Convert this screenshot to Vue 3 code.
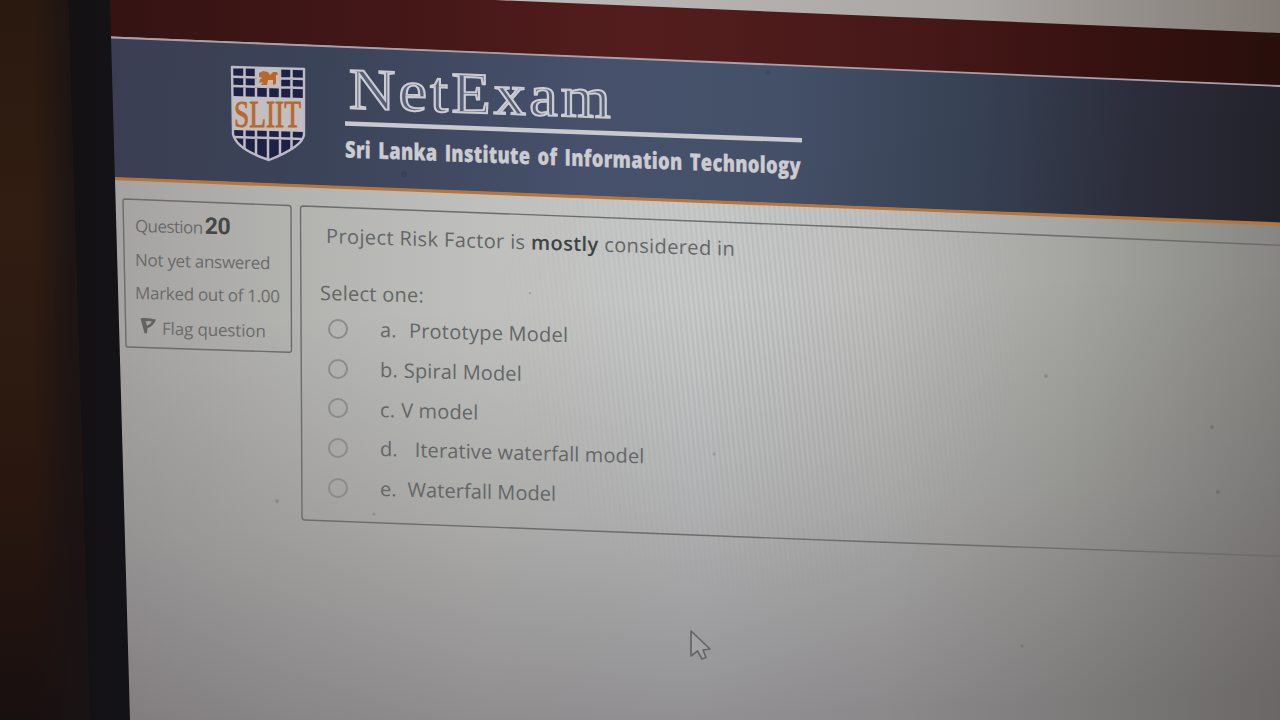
<script setup>
const options = [
  { key: 'a', letter: 'a.', text: 'Prototype Model' },
  { key: 'b', letter: 'b.', text: 'Spiral Model' },
  { key: 'c', letter: 'c.', text: 'V model' },
  { key: 'd', letter: 'd.', text: 'Iterative waterfall model' },
  { key: 'e', letter: 'e.', text: 'Waterfall Model' }
]
const specks = [
  [768, 73, 2.4], [404, 174, 3], [1046, 376, 2], [1212, 427, 2], [1218, 492, 2],
  [714, 454, 1.5], [277, 501, 2], [374, 514, 1.5], [530, 293, 1.2], [1022, 646, 1.5]
]
</script>

<template>
  <main class="scene">
    <svg class="backdrop" viewBox="0 0 1280 720" aria-hidden="true">
      <defs>
        <linearGradient id="page" x1="110" x2="1280" y1="0" y2="0" gradientUnits="userSpaceOnUse">
          <stop offset="0" stop-color="#a5a3a2" />
          <stop offset=".15" stop-color="#b2b2af" />
          <stop offset=".32" stop-color="#bfc0bd" />
          <stop offset=".5" stop-color="#c4c6c6" />
          <stop offset=".66" stop-color="#bbbcba" />
          <stop offset=".82" stop-color="#a5a6a1" />
          <stop offset="1" stop-color="#878682" />
        </linearGradient>
        <linearGradient id="fall" x1="640" x2="660" y1="300" y2="720" gradientUnits="userSpaceOnUse">
          <stop offset="0" stop-color="#383038" stop-opacity="0" />
          <stop offset=".5" stop-color="#383038" stop-opacity=".15" />
          <stop offset="1" stop-color="#383038" stop-opacity=".36" />
        </linearGradient>
        <linearGradient id="banner" x1="112" x2="1280" y1="0" y2="90" gradientUnits="userSpaceOnUse">
          <stop offset="0" stop-color="#3b3e52" />
          <stop offset=".18" stop-color="#3b4358" />
          <stop offset=".42" stop-color="#47516c" />
          <stop offset=".58" stop-color="#445068" />
          <stop offset=".75" stop-color="#364052" />
          <stop offset=".88" stop-color="#2c2d3b" />
          <stop offset="1" stop-color="#22222b" />
        </linearGradient>
        <linearGradient id="maroon" x1="110" x2="1280" y1="0" y2="0" gradientUnits="userSpaceOnUse">
          <stop offset="0" stop-color="#351313" />
          <stop offset=".25" stop-color="#441717" />
          <stop offset=".45" stop-color="#541d1d" />
          <stop offset=".7" stop-color="#461818" />
          <stop offset=".86" stop-color="#35110f" />
          <stop offset="1" stop-color="#280f0c" />
        </linearGradient>
        <linearGradient id="chrome" x1="495" x2="1280" y1="0" y2="0" gradientUnits="userSpaceOnUse">
          <stop offset="0" stop-color="#bdbbbb" />
          <stop offset=".6" stop-color="#aaa6a3" />
          <stop offset="1" stop-color="#827b76" />
        </linearGradient>
        <linearGradient id="wall" x1="0" x2="0" y1="0" y2="720" gradientUnits="userSpaceOnUse">
          <stop offset="0" stop-color="#2a190f" />
          <stop offset=".3" stop-color="#311d12" />
          <stop offset=".68" stop-color="#29170f" />
          <stop offset="1" stop-color="#180f0f" />
        </linearGradient>
        <linearGradient id="wallShade" x1="0" x2="95" y1="0" y2="0" gradientUnits="userSpaceOnUse">
          <stop offset=".35" stop-color="#1a1314" stop-opacity="0" />
          <stop offset=".75" stop-color="#1a1314" stop-opacity=".85" />
        </linearGradient>
        <linearGradient id="bezel" x1="66" x2="128" y1="0" y2="0" gradientUnits="userSpaceOnUse">
          <stop offset="0" stop-color="#141012" />
          <stop offset="1" stop-color="#131317" />
        </linearGradient>
        <radialGradient id="spot" cx="760" cy="330" r="270" gradientUnits="userSpaceOnUse">
          <stop offset="0" stop-color="#fff" />
          <stop offset="1" stop-color="#000" />
        </radialGradient>
        <pattern id="stripes" width="5" height="20" patternUnits="userSpaceOnUse" patternTransform="rotate(-6)">
          <rect width="1.6" height="20" fill="#fff" opacity=".15" />
          <rect x="2.6" width="1.4" height="20" fill="#555" opacity=".09" />
        </pattern>
        <mask id="spotMask"><rect width="1280" height="720" fill="url(#spot)" /></mask>
      </defs>
      <rect width="1280" height="720" fill="url(#page)" />
      <rect width="1280" height="720" fill="url(#fall)" />
      <rect y="200" width="1280" height="520" fill="url(#stripes)" mask="url(#spotMask)" />
      <path d="M490 0H1280V40Z" fill="url(#chrome)" />
      <path d="M100 0H495L1280 33V86L100 36Z" fill="url(#maroon)" />
      <path d="M100 37L640 59L1280 86V223L640 198L100 177Z" fill="url(#banner)" />
      <path d="M100 37L640 59L1280 86" fill="none" stroke="#aaa0aa" stroke-width="1.8" />
      <path d="M100 178L640 199L1280 224" fill="none" stroke="#b8753a" stroke-width="3.2" />
      <path d="M125 199L289 205.500Q291 206 291 208L291.500 350Q291.500 352.500 289 352.300L128 347Q126 347 126 345L123 201Q123 199 125 199Z" class="outline" />
      <path d="M1285 245.500L850 227L303 206Q300.500 206 300.500 209L302 517Q302 520 305 520L850 541L1285 556.500" class="outline" />
      <path d="M0 0H110L130 720H0Z" fill="url(#bezel)" />
      <path d="M0 0H68L90 720H0Z" fill="url(#wall)" />
      <path d="M0 0H68L90 720H0Z" fill="url(#wallShade)" />
      <circle v-for="(s, i) in specks" :key="i" :cx="s[0]" :cy="s[1]" :r="s[2]" fill="#25252c" opacity=".18" />
    </svg>

    <div class="screen">
      <header class="brand">
        <svg class="crest" viewBox="0 0 76 98" aria-label="SLIIT">
          <defs><clipPath id="shield"><path d="M2 2L74 4V70Q72 82 39 95Q6 84 3 69Z" /></clipPath></defs>
          <path d="M2 2L74 4V70Q72 82 39 95Q6 84 3 69Z" fill="#1d2145" />
          <g clip-path="url(#shield)">
            <path d="M14.500 3V94M26 3V94M38 20V96M50 3V94M61.500 4V94M3 11.800L74 14M3 21L74 23M3 72L73 74" stroke="#bdbac1" stroke-width="2.500" fill="none" />
          </g>
          <path d="M27 3L49 4V22L27 21Z" fill="#c2bdbf" />
          <path d="M3 31L74 33V67L3 65Z" fill="#c2bfc3" />
          <path d="M2 2L74 4V70Q72 82 39 95Q6 84 3 69Z" fill="none" stroke="#bdbac1" stroke-width="2.400" stroke-linejoin="round" />
          <path d="M29 8l4-2 5 1 2 3 3-3 4 0 1 3-2 0 0 9-3 1 0-5-5 0-1 5-6 0 2-3-4 1 1-4 3-1-4-1z" fill="#b9672b" />
          <text x="4" y="62" textLength="67" lengthAdjust="spacingAndGlyphs" class="crest-name">SLIIT</text>
        </svg>
        <svg class="wordmark" viewBox="0 0 470 130" aria-label="NetExam">
          <text x="4" y="43" textLength="265" lengthAdjust="spacingAndGlyphs" class="product">NetExam</text>
          <path d="M0 58.500L457 58.500" stroke="#c9c8ce" stroke-width="4.600" />
          <text x="0" y="92.500" textLength="456" lengthAdjust="spacingAndGlyphs" class="institute">Sri Lanka Institute of Information Technology</text>
        </svg>
      </header>

      <div class="content">
        <aside class="info">
          <p class="number">Question <b>20</b></p>
          <p class="state">Not yet answered</p>
          <p class="grade">Marked out of 1.00</p>
          <p class="flag">
            <svg viewBox="0 0 18 18"><path d="M1.500 2Q9 1 17 3Q15 9 8.500 12L8 17H5.500Z" fill="#626263" /><path d="M6.500 5Q10 4.500 13 5Q11.500 8 8 9.500Z" fill="#a3a3a2" /></svg>
            <span>Flag question</span>
          </p>
        </aside>
        <section class="question">
          <p class="stem">Project Risk Factor is <b>mostly</b> considered in</p>
          <p class="prompt">Select one:</p>
          <ul>
            <li v-for="o in options" :key="o.key" :class="o.key">
              <i class="radio"></i>
              <span class="label"><span class="letter">{{ o.letter }}</span><span>{{ o.text }}</span></span>
            </li>
          </ul>
        </section>
      </div>
    </div>

    <svg class="pointer" viewBox="0 0 24 34"><path d="M2 2V27L8.500 22L13 30L17 28.500L14 21L21 20Z" fill="#a4a3a4" stroke="#666567" stroke-width="1.700" stroke-linejoin="round" /></svg>
  </main>
</template>

<style>
body { margin: 0; background: #171214; }
</style>

<style scoped>
.scene { position: relative; width: 1280px; height: 720px; overflow: hidden; font-family: "Open Sans", "Noto Sans", sans-serif; color: #646667; }
.backdrop { position: absolute; inset: 0; width: 1280px; height: 720px; }
.outline { fill: none; stroke: #6b6c6c; stroke-width: 1.400; }
.screen { position: relative; }
.brand { display: flex; gap: 39px; height: 199px; box-sizing: border-box; padding: 65px 0 0 230px; }
.crest { width: 76px; height: 98px; flex: none; overflow: visible; }
.crest-name { font: 38px "Liberation Serif", serif; fill: #b9672b; stroke: #b9672b; stroke-width: .9; }
.wordmark { width: 470px; height: 130px; flex: none; overflow: visible; transform: skewY(2.1deg); transform-origin: 0 0; }
.product { font: 58px "Liberation Serif", serif; letter-spacing: 3px; fill: #566079; stroke: #cccbd0; stroke-width: 2; }
.institute { font: 800 23px "Open Sans", sans-serif; fill: #cccbd0; stroke: #cccbd0; stroke-width: .3; word-spacing: 2.500px; letter-spacing: .4px; }
.content { display: flex; align-items: flex-start; }
p, ul { margin: 0; padding: 0; list-style: none; white-space: nowrap; }
.info { width: 165px; margin-left: 135px; padding-top: 10px; font-size: 17px; color: #6a6a6a; }
.info p { height: 34px; line-height: 34px; transform-origin: 0 50%; transform: skewY(1.4deg); }
.info .number { letter-spacing: -.6px; }
.info .state { letter-spacing: -.28px; }
.number b { font: 700 23px Roboto, sans-serif; color: #454747; letter-spacing: -.6px; margin-left: -1.500px; }
.info .grade { height: 33px; line-height: 31px; letter-spacing: -.3px; }
.flag { display: flex; align-items: center; gap: 5px; padding-left: 4px; letter-spacing: -.15px; }
.info .flag { line-height: 37px; }
.flag svg { width: 18px; height: 18px; margin-top: -4px; }
.question { width: 700px; padding-top: 20px; font-size: 20px; }
.stem { margin-left: 26px; line-height: 34px; letter-spacing: .38px; transform: skewY(1.8deg); transform-origin: 0 50%; }
.stem b { color: #3e4345; font-weight: 600; }
.prompt { margin: 23px 0 0 20px; line-height: 34px; letter-spacing: .25px; transform: skewY(1.4deg); transform-origin: 0 50%; }
li { display: flex; align-items: center; height: 39.700px; padding-left: 28px; }
ul { margin-top: -1px; }
.radio { width: 16px; height: 16px; border: 2px solid #8a8b8a; border-radius: 50%; box-sizing: content-box; margin-right: 31.500px; }
.label { display: flex; gap: 6px; padding-top: 2px; letter-spacing: .15px; transform: skewY(1.6deg); transform-origin: 0 50%; }
.a .label { gap: 12px; letter-spacing: .25px; }
.d .label { gap: 17px; letter-spacing: .1px; }
.e .label { gap: 11px; letter-spacing: .05px; }
.pointer { position: absolute; left: 689px; top: 629px; width: 24px; height: 34px; }
</style>
